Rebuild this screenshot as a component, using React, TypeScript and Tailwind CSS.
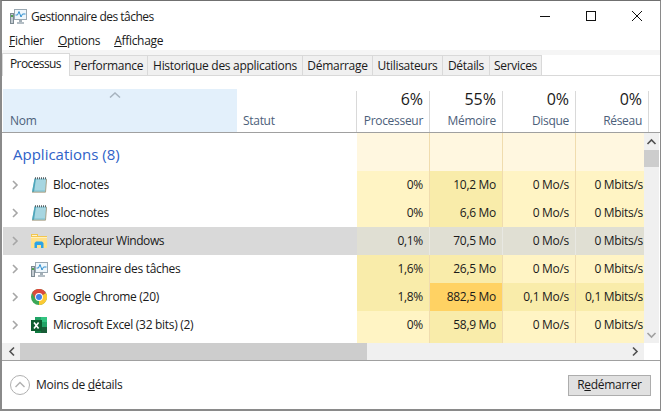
import * as React from 'react'

const font = { fontFamily: '"Open Sans", "Noto Sans", sans-serif' }

const TaskIcon = () => (
    <svg className="shrink-0" width="17" height="15" viewBox="0 0 17 15">
        <rect x="0.5" y="4.5" width="3" height="10" fill="#c4ccd2" stroke="#7d8a92" />
        <rect x="1" y="6" width="2" height="2" fill="#4fa34f" />
        <rect x="4.5" y="0.5" width="12" height="10" fill="#eef6fb" stroke="#9aa8b2" />
        <path d="M5.5 6 L7.5 6 L9 2.5 L11 8 L12.5 5 L15.5 5" fill="none" stroke="#2f8fd0" />
        <rect x="9" y="11" width="3" height="2" fill="#a3afb7" />
        <rect x="7" y="13" width="7" height="2" fill="#b4bec5" />
    </svg>
)

const NotepadIcon = () => (
    <svg width="16" height="16" viewBox="0 0 16 16">
        <path d="M3.5 1.5 H15.5 L14.5 15 H1 Z" fill="#8fcbd9" />
        <path d="M3.3 4 H15 M3 6 H14.8 M2.8 8 H14.7 M2.6 10 H14.6 M2.4 12 H14.4" stroke="#c4e4eb" strokeWidth="0.9" />
        <path d="M1 15 L3.5 1.5 H5 L3 15 Z" fill="#4fa6ba" />
        <path d="M1 15.2 H14.5 L15.6 2" fill="none" stroke="#a39a7e" strokeWidth="0.9" />
        <path d="M4 1.2 H15" stroke="#555f63" strokeWidth="2" strokeDasharray="1 1" />
    </svg>
)

const FolderIcon = () => (
    <svg width="16" height="16" viewBox="0 0 16 16">
        <rect x="0" y="1" width="7" height="3" fill="#f3c64f" />
        <rect x="1" y="2" width="5" height="1" fill="#fff4cf" />
        <rect x="7" y="3" width="9" height="1" fill="#f3c64f" />
        <rect x="0" y="4" width="16" height="11" fill="#ffe08a" />
        <rect x="0" y="4" width="16" height="1" fill="#fff0bd" />
        <path d="M3.5 15 V10 L5 8.5 H11 L12.5 10 V15 H10 V12 H6 V15 Z" fill="#2ba3e6" />
    </svg>
)

const ChromeIcon = () => (
    <svg width="16" height="16" viewBox="0 0 16 16">
        <circle cx="8" cy="8" r="8" fill="#3aa757" />
        <path d="M8 8 L15 4 A8 8 0 0 1 8 16 Z" fill="#fcc934" />
        <path d="M8 8 L1 4 A8 8 0 0 1 15 4 Z" fill="#dd4a3d" />
        <path d="M1 4 L4.5 10 L8 8 Z" fill="#dd4a3d" />
        <circle cx="8" cy="8" r="3.9" fill="#ffffff" />
        <circle cx="8" cy="8" r="3" fill="#3f81ea" />
    </svg>
)

const ExcelIcon = () => (
    <svg width="16" height="16" viewBox="0 0 16 16">
        <rect x="4" y="0" width="12" height="16" fill="#107c41" />
        <rect x="10" y="0" width="6" height="5" fill="#33c481" />
        <rect x="4" y="0" width="6" height="5" fill="#21a366" />
        <rect x="10" y="5" width="6" height="5" fill="#21a366" />
        <rect x="10" y="10" width="6" height="6" fill="#185c37" />
        <rect x="0" y="3" width="11" height="11" fill="#0e5c2f" />
        <path d="M3 5.5 L7.6 11.5 M7.6 5.5 L3 11.5" stroke="#ffffff" strokeWidth="1.6" />
    </svg>
)

const Chevron = () => (
    <svg width="7" height="10" viewBox="0 0 7 10" className="shrink-0">
        <path d="M1 1 L5 5 L1 9" fill="none" stroke="#a6a6a6" strokeWidth="1.6" />
    </svg>
)

const rows = [
    { name: 'Bloc-notes', icon: <NotepadIcon />, cpu: '0%', mem: '10,2 Mo', disk: '0 Mo/s', net: '0 Mbits/s', cpuBg: 'bg-[#fff4c4]', memBg: 'bg-[#f9ecaa]', ioBg: 'bg-[#fff4c4]', nameBg: '', line: 'border-[#f0dcae]', track: '' },
    { name: 'Bloc-notes', icon: <NotepadIcon />, cpu: '0%', mem: '6,6 Mo', disk: '0 Mo/s', net: '0 Mbits/s', cpuBg: 'bg-[#fff4c4]', memBg: 'bg-[#f9ecaa]', ioBg: 'bg-[#fff4c4]', nameBg: '', line: 'border-[#f0dcae]', track: '' },
    { name: 'Explorateur Windows', icon: <FolderIcon />, cpu: '0,1%', mem: '70,5 Mo', disk: '0 Mo/s', net: '0 Mbits/s', cpuBg: 'bg-[#e0dfd3]', memBg: 'bg-[#e0dfd3]', ioBg: 'bg-[#e0dfd3]', nameBg: 'bg-[#d9d9d9]', line: 'border-[#e8e8e2]', track: 'tracking-[-0.45px]' },
    { name: 'Gestionnaire des tâches', icon: <TaskIcon />, cpu: '1,6%', mem: '26,5 Mo', disk: '0 Mo/s', net: '0 Mbits/s', cpuBg: 'bg-[#f9ecaa]', memBg: 'bg-[#f9ecaa]', ioBg: 'bg-[#fff4c4]', nameBg: '', line: 'border-[#f0dcae]', track: '' },
    { name: 'Google Chrome (20)', icon: <ChromeIcon />, cpu: '1,8%', mem: '882,5 Mo', disk: '0,1 Mo/s', net: '0,1 Mbits/s', cpuBg: 'bg-[#f9ecaa]', memBg: 'bg-[#ffd263]', ioBg: 'bg-[#f9ecaa]', nameBg: '', line: 'border-[#f0dcae]', track: '' },
    { name: 'Microsoft Excel (32 bits) (2)', icon: <ExcelIcon />, cpu: '0%', mem: '58,9 Mo', disk: '0 Mo/s', net: '0 Mbits/s', cpuBg: 'bg-[#fff4c4]', memBg: 'bg-[#f9ecaa]', ioBg: 'bg-[#fff4c4]', nameBg: '', line: 'border-[#f0dcae]', track: '' },
]

const tabs = [
    { label: 'Performance', w: 'w-[78px]' },
    { label: 'Historique des applications', w: 'w-[155px]' },
    { label: 'Démarrage', w: 'w-[70px]' },
    { label: 'Utilisateurs', w: 'w-[70px]' },
    { label: 'Détails', w: 'w-[47px]' },
    { label: 'Services', w: 'w-[52px]' },
]

const columns = [
    { pct: '6%', label: 'Processeur' },
    { pct: '55%', label: 'Mémoire' },
    { pct: '0%', label: 'Disque' },
    { pct: '0%', label: 'Réseau' },
]

const cell = 'w-[73px] shrink-0 h-full flex items-center justify-end pr-[6px] border-r'

export default () => {
    return (
        <div style={font} className="w-[661px] h-[411px] overflow-hidden bg-white flex flex-col border-l-2 border-r border-b-2 border-[#8a8a8a] border-t border-t-[#707070] text-[12px] text-[#1a1a1a] tracking-[-0.3px]">
            <div className="h-[31px] shrink-0 flex items-center pl-[8px]">
                <TaskIcon />
                <span className="ml-[4px] tracking-[-0.5px]">Gestionnaire des tâches</span>
                <div className="ml-auto flex items-center -mt-[2px]">
                    <svg width="12" height="12" viewBox="0 0 12 12" className="mr-[34px]">
                        <path d="M1 6.5 H11" stroke="#111" />
                    </svg>
                    <svg width="12" height="12" viewBox="0 0 12 12" className="mr-[34px]">
                        <rect x="1.5" y="1.5" width="9" height="9" fill="none" stroke="#111" />
                    </svg>
                    <svg width="12" height="12" viewBox="0 0 12 12" className="mr-[17px]">
                        <path d="M1 1 L11 11 M11 1 L1 11" stroke="#111" />
                    </svg>
                </div>
            </div>
            <div className="h-[18px] shrink-0 flex items-center pl-[7px] gap-[14px]">
                <span><u>F</u>ichier</span>
                <span><u>O</u>ptions</span>
                <span><u>A</u>ffichage</span>
            </div>
            <div className="h-[26px] shrink-0 flex items-end bg-[linear-gradient(#f5f5f5_5px,#ffffff_5px)] border-b border-[#d9d9d9] relative">
                <div className="w-[68px] h-[23px] -mb-px bg-white border border-b-0 border-[#d9d9d9] pl-[7px] pt-[1px] z-10 tracking-[-0.6px]">Processus</div>
                {tabs.map((t) => (
                    <div key={t.label} className={`${t.w} h-[20px] bg-[#f0f0f0] border-t border-r border-[#d9d9d9] flex items-center justify-center`}>
                        {t.label}
                    </div>
                ))}
            </div>
            <div className="h-[56px] shrink-0 flex border-b border-[#a0a0a0] mt-[1px] pt-[12px]">
                <div className="w-[234px] ml-[1px] bg-[#e3f0fb] relative text-[#4c607a] flex items-end pl-[7px] pb-[2px]">
                    <span>Nom</span>
                    <svg width="12" height="6" viewBox="0 0 12 6" className="absolute left-[106px] top-[3px]">
                        <path d="M1 5.5 L6 1 L11 5.5" fill="none" stroke="#a7b3bf" strokeWidth="1.5" />
                    </svg>
                </div>
                <div className="w-[120px] mt-[2px] flex items-end pl-[6px] pb-[2px] text-[#4c607a] border-r border-[#d9d9d9]">Statut</div>
                {columns.map((c) => (
                    <div key={c.label} className="w-[73px] mt-[2px] flex flex-col items-end justify-end pr-[6px] pb-[2px] border-r border-[#d9d9d9]">
                        <span className="text-[16px] leading-[20px] tracking-normal">{c.pct}</span>
                        <span className="text-[#4c607a] mt-[3px]">{c.label}</span>
                    </div>
                ))}
            </div>
            <div className="h-[210px] shrink-0 flex overflow-hidden">
                <div className="w-[642px] shrink-0 overflow-hidden flex flex-col">
                    <div className="h-[38px] shrink-0 flex">
                        <div className="w-[355px] shrink-0 flex items-center pl-[11px] pt-[4px] text-[15px] text-[#2f62c8] tracking-normal">Applications (8)</div>
                        <div className="w-[73px] shrink-0 bg-[#fff7e0] border-r border-[#f0dcae]" />
                        <div className="w-[73px] shrink-0 bg-[#fff7e0] border-r border-[#f0dcae]" />
                        <div className="w-[73px] shrink-0 bg-[#fff7e0] border-r border-[#f0dcae]" />
                        <div className="w-[68px] shrink-0 bg-[#fff7e0]" />
                    </div>
                    {rows.map((r, i) => (
                        <div key={i} className="h-[28px] shrink-0 flex">
                            <div className={`w-[354px] ml-[1px] shrink-0 flex items-center pl-[9px] ${r.nameBg}`}>
                                <Chevron />
                                <div className="ml-[12px] w-[16px] h-[16px] flex items-center justify-center">{r.icon}</div>
                                <span className={`ml-[6px] ${r.track}`}>{r.name}</span>
                            </div>
                            <div className={`${cell} ${r.line} ${r.cpuBg}`}>{r.cpu}</div>
                            <div className={`${cell} ${r.line} ${r.memBg}`}>{r.mem}</div>
                            <div className={`${cell} ${r.line} ${r.ioBg}`}>{r.disk}</div>
                            <div className={`w-[68px] shrink-0 h-full flex items-center justify-end whitespace-nowrap pr-[1px] ${r.ioBg}`}>{r.net}</div>
                        </div>
                    ))}
                    <div className="h-[4px] shrink-0 flex">
                        <div className="w-[355px] shrink-0" />
                        <div className="w-[73px] shrink-0 bg-[#fff4c4] border-r border-[#f0dcae]" />
                        <div className="w-[73px] shrink-0 bg-[#f9ecaa] border-r border-[#f0dcae]" />
                        <div className="w-[73px] shrink-0 bg-[#fff4c4] border-r border-[#f0dcae]" />
                        <div className="w-[68px] shrink-0 bg-[#fff4c4]" />
                    </div>
                </div>
                <div className="w-[15px] shrink-0 bg-[#f0f0f0] flex flex-col items-center">
                    <svg width="15" height="17" viewBox="0 0 15 17" className="shrink-0">
                        <path d="M3.5 11 L7.5 7 L11.5 11" fill="none" stroke="#505050" strokeWidth="1.6" />
                    </svg>
                    <div className="w-[15px] h-[17px] bg-[#cdcdcd]" />
                    <svg width="15" height="17" viewBox="0 0 15 17" className="mt-auto shrink-0">
                        <path d="M3.5 7 L7.5 11 L11.5 7" fill="none" stroke="#a0a0a0" strokeWidth="1.6" />
                    </svg>
                </div>
            </div>
            <div className="h-[17px] shrink-0 flex items-center">
                <div className="w-[642px] h-full flex items-center bg-[#f0f0f0]">
                    <svg width="18" height="17" viewBox="0 0 18 17" className="shrink-0">
                        <path d="M12 4.5 L8 8.5 L12 12.5" fill="none" stroke="#505050" strokeWidth="1.6" />
                    </svg>
                    <div className="w-[347px] h-full bg-[#cdcdcd]" />
                    <svg width="17" height="17" viewBox="0 0 17 17" className="shrink-0 ml-auto">
                        <path d="M6 4.5 L10 8.5 L6 12.5" fill="none" stroke="#505050" strokeWidth="1.6" />
                    </svg>
                </div>
            </div>
            <div className="flex-1 border-t border-[#a0a0a0] flex items-center pl-[8px] pr-[9px]">
                <svg width="20" height="20" viewBox="0 0 20 20" className="shrink-0">
                    <circle cx="10" cy="10" r="9.5" fill="none" stroke="#b0b0b0" />
                    <path d="M5.5 12 L10 7.5 L14.5 12" fill="none" stroke="#b0b0b0" strokeWidth="1.4" />
                </svg>
                <span className="ml-[6px]">Moins de <u>d</u>étails</span>
                <div className="ml-auto w-[83px] h-[21px] bg-[#e1e1e1] border border-[#adadad] flex items-center justify-center">
                    <span>R<u>e</u>démarrer</span>
                </div>
            </div>
        </div>
    )
}
